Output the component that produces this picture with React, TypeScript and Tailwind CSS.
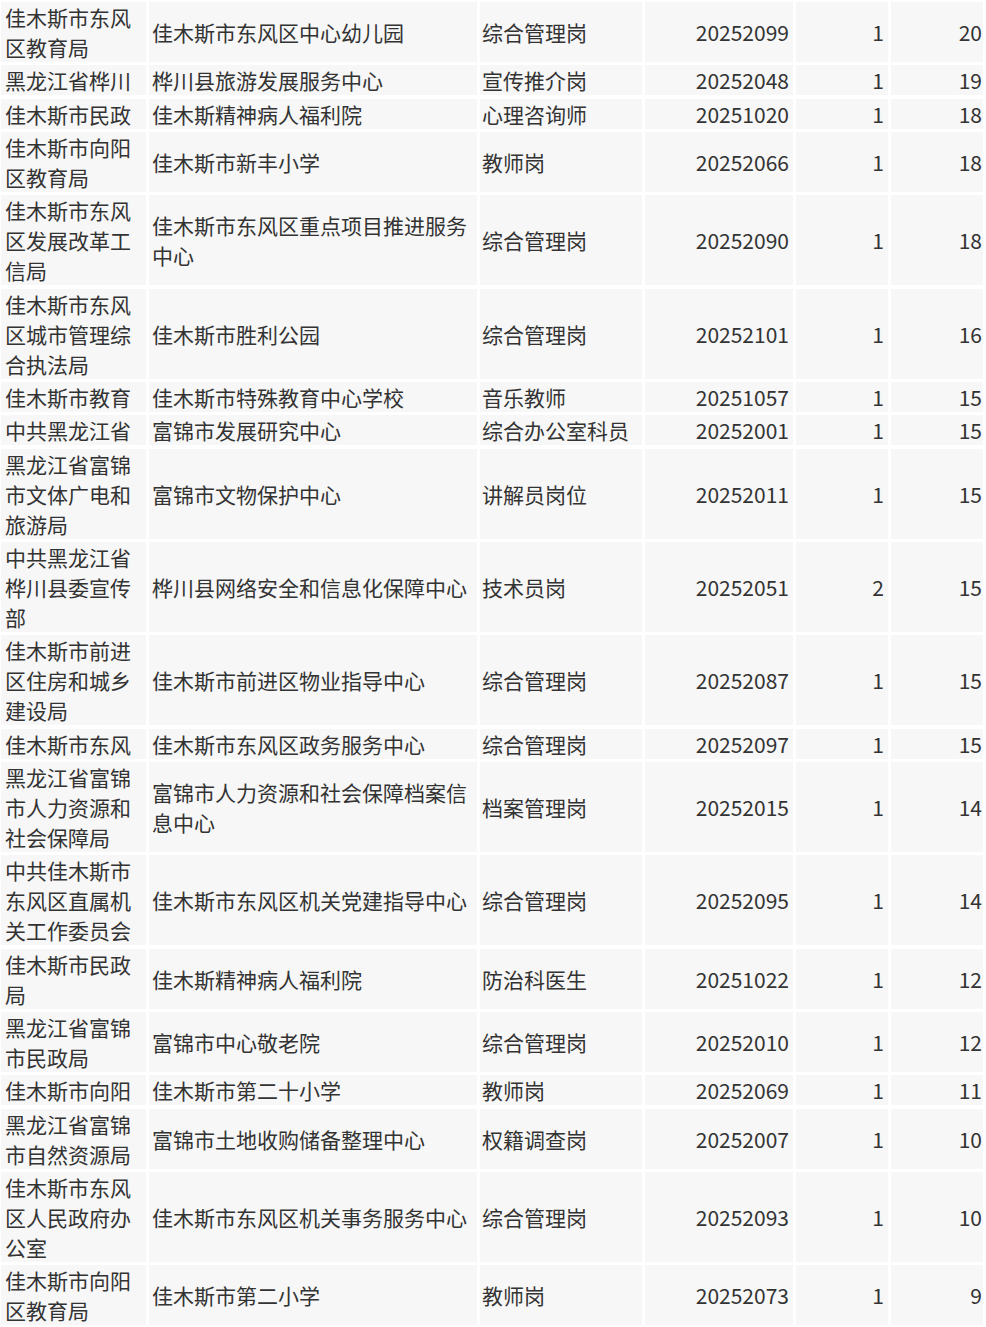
import React from "react";

type Row = [string, string, string, string, string, string];

const rows: Row[] = [
  ["佳木斯市东风区教育局", "佳木斯市东风区中心幼儿园", "综合管理岗", "20252099", "1", "20"],
  ["黑龙江省桦川", "桦川县旅游发展服务中心", "宣传推介岗", "20252048", "1", "19"],
  ["佳木斯市民政", "佳木斯精神病人福利院", "心理咨询师", "20251020", "1", "18"],
  ["佳木斯市向阳区教育局", "佳木斯市新丰小学", "教师岗", "20252066", "1", "18"],
  ["佳木斯市东风区发展改革工信局", "佳木斯市东风区重点项目推进服务中心", "综合管理岗", "20252090", "1", "18"],
  ["佳木斯市东风区城市管理综合执法局", "佳木斯市胜利公园", "综合管理岗", "20252101", "1", "16"],
  ["佳木斯市教育", "佳木斯市特殊教育中心学校", "音乐教师", "20251057", "1", "15"],
  ["中共黑龙江省", "富锦市发展研究中心", "综合办公室科员", "20252001", "1", "15"],
  ["黑龙江省富锦市文体广电和旅游局", "富锦市文物保护中心", "讲解员岗位", "20252011", "1", "15"],
  ["中共黑龙江省桦川县委宣传部", "桦川县网络安全和信息化保障中心", "技术员岗", "20252051", "2", "15"],
  ["佳木斯市前进区住房和城乡建设局", "佳木斯市前进区物业指导中心", "综合管理岗", "20252087", "1", "15"],
  ["佳木斯市东风", "佳木斯市东风区政务服务中心", "综合管理岗", "20252097", "1", "15"],
  ["黑龙江省富锦市人力资源和社会保障局", "富锦市人力资源和社会保障档案信息中心", "档案管理岗", "20252015", "1", "14"],
  ["中共佳木斯市东风区直属机关工作委员会", "佳木斯市东风区机关党建指导中心", "综合管理岗", "20252095", "1", "14"],
  ["佳木斯市民政局", "佳木斯精神病人福利院", "防治科医生", "20251022", "1", "12"],
  ["黑龙江省富锦市民政局", "富锦市中心敬老院", "综合管理岗", "20252010", "1", "12"],
  ["佳木斯市向阳", "佳木斯市第二十小学", "教师岗", "20252069", "1", "11"],
  ["黑龙江省富锦市自然资源局", "富锦市土地收购储备整理中心", "权籍调查岗", "20252007", "1", "10"],
  ["佳木斯市东风区人民政府办公室", "佳木斯市东风区机关事务服务中心", "综合管理岗", "20252093", "1", "10"],
  ["佳木斯市向阳区教育局", "佳木斯市第二小学", "教师岗", "20252073", "1", "9"],
];

export default function App() {
  return (
    <div
      className="w-[986px] h-[1327px] overflow-hidden bg-white text-[#333333]"
      style={{ fontFamily: '"Noto Sans CJK SC", "Noto Sans", sans-serif' }}
    >
      <div className="ml-[1px] mt-[2px] grid grid-cols-[145px_328px_162px_148px_92px_92px] gap-x-[3px] gap-y-[3.33px] text-[21px] leading-[30px]">
        {rows.map((r, i) => (
          <React.Fragment key={i}>
            <div className="flex items-center bg-[#f7f7f7] pl-[4px] break-all">{r[0]}</div>
            <div className="flex items-center bg-[#f7f7f7] pl-[3px] pr-[2px] break-all">{r[1]}</div>
            <div className="flex items-center bg-[#f7f7f7] pl-[2px]">{r[2]}</div>
            <div className="flex items-center justify-end bg-[#f7f7f7] pr-[4px]">{r[3]}</div>
            <div className="flex items-center justify-end bg-[#f7f7f7] pr-[4px]">{r[4]}</div>
            <div className="flex items-center justify-end bg-[#f7f7f7] pr-[1px]">{r[5]}</div>
          </React.Fragment>
        ))}
      </div>
    </div>
  );
}
